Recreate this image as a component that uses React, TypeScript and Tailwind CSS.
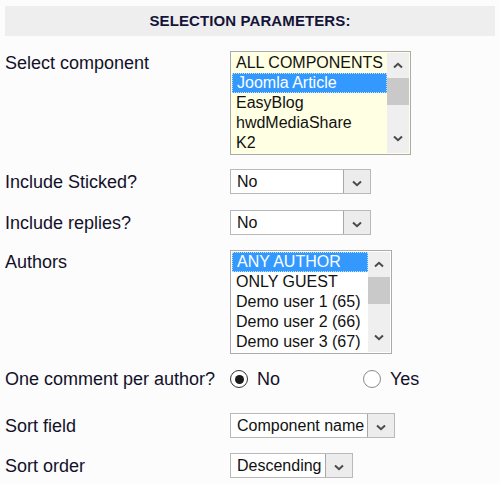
import React from "react";

const font = { fontFamily: '"Liberation Sans", Arial, sans-serif' };

function Chevron({ dir, className = "" }: { dir: "up" | "down"; className?: string }) {
  return (
    <svg width="10" height="7" viewBox="0 0 10 7" className={className}>
      {dir === "up" ? (
        <path d="M1 5.5 L5 1.8 L9 5.5" fill="none" stroke="#4a4a4a" strokeWidth="2" />
      ) : (
        <path d="M1 1.5 L5 5.2 L9 1.5" fill="none" stroke="#4a4a4a" strokeWidth="2" />
      )}
    </svg>
  );
}

function ListBox({
  items,
  selected,
  width,
  bg,
}: {
  items: string[];
  selected: number;
  width: string;
  bg: string;
}) {
  return (
    <div className={`flex border border-[#ababab] p-px ${width} ${bg}`}>
      <div className="flex-1 flex flex-col">
        {items.map((it, i) => (
          <div
            key={it}
            className={`h-5 leading-5 text-[16px] pl-1 whitespace-nowrap overflow-hidden ${
              i === selected
                ? "bg-[#3399ff] text-white border border-dotted border-[#ffffff]/70 leading-[18px]"
                : "text-[#111]"
            }`}
          >
            {it}
          </div>
        ))}
      </div>
      <div className="w-[22px] bg-[#efefef] flex flex-col">
        <div className="h-[25px] flex items-center justify-center">
          <Chevron dir="up" />
        </div>
        <div className="h-[27px] bg-[#c9c9c9]" />
        <div className="flex-1 flex items-end justify-center pb-[11px]">
          <Chevron dir="down" />
        </div>
      </div>
    </div>
  );
}

function Select({ value, width }: { value: string; width: string }) {
  return (
    <div className={`flex h-[25px] border border-[#b9b9b9] bg-white ${width}`}>
      <div className="flex-1 pl-[6px] text-[16px] leading-[23px] text-[#111] whitespace-nowrap">
        {value}
      </div>
      <div className="w-[27px] bg-[#ececec] border-l border-[#a8a8a8] flex items-center justify-center pt-[3px]">
        <Chevron dir="down" />
      </div>
    </div>
  );
}

function Radio({ checked }: { checked: boolean }) {
  return (
    <div
      className={`w-[18px] h-[18px] rounded-full border flex items-center justify-center bg-white ${
        checked ? "border-[#333]" : "border-[#8a8a8a]"
      }`}
    >
      {checked && <div className="w-[9px] h-[9px] rounded-full bg-[#1a1a1a]" />}
    </div>
  );
}

function Row({
  label,
  children,
  className = "",
  center = true,
}: {
  label: string;
  children: React.ReactNode;
  className?: string;
  center?: boolean;
}) {
  return (
    <div className={`flex ${center ? "items-center" : "items-start"} ${className}`}>
      <div
        className={`w-[230px] pl-[5px] text-[18px] leading-5 text-[#14102a] whitespace-nowrap ${
          center ? "" : "pt-[2px]"
        }`}
      >
        {label}
      </div>
      {children}
    </div>
  );
}

export default function App() {
  return (
    <div className="w-[500px] h-[484px] bg-[#fbfcfb] pt-[6px] overflow-hidden" style={font}>
      <div className="mx-[5px] h-[30px] bg-[#eeeeee] flex items-center justify-center">
        <span className="text-[15px] font-bold text-[#141438] tracking-[0.1px]">
          SELECTION PARAMETERS:
        </span>
      </div>

      <Row label="Select component" center={false} className="mt-[15px]">
        <ListBox
          items={["ALL COMPONENTS", "Joomla Article", "EasyBlog", "hwdMediaShare", "K2"]}
          selected={1}
          width="w-[181px]"
          bg="bg-[#ffffe3]"
        />
      </Row>

      <Row label="Include Sticked?" className="mt-[14px]">
        <Select value="No" width="w-[141px]" />
      </Row>

      <Row label="Include replies?" className="mt-[16px]">
        <Select value="No" width="w-[141px]" />
      </Row>

      <Row label="Authors" center={false} className="mt-[15px]">
        <ListBox
          items={["ANY AUTHOR", "ONLY GUEST", "Demo user 1 (65)", "Demo user 2 (66)", "Demo user 3 (67)"]}
          selected={0}
          width="w-[162px]"
          bg="bg-white"
        />
      </Row>

      <Row label="One comment per author?" className="mt-[15px] h-[20px]">
        <div className="flex items-center text-[18px] leading-5 text-[#14102a]">
          <Radio checked />
          <span className="ml-[9px] w-[106px]">No</span>
          <Radio checked={false} />
          <span className="ml-[9px]">Yes</span>
        </div>
      </Row>

      <Row label="Sort field" className="mt-[24px]">
        <Select value="Component name" width="w-[165px]" />
      </Row>

      <Row label="Sort order" className="mt-[15px]">
        <Select value="Descending" width="w-[123px]" />
      </Row>
    </div>
  );
}
